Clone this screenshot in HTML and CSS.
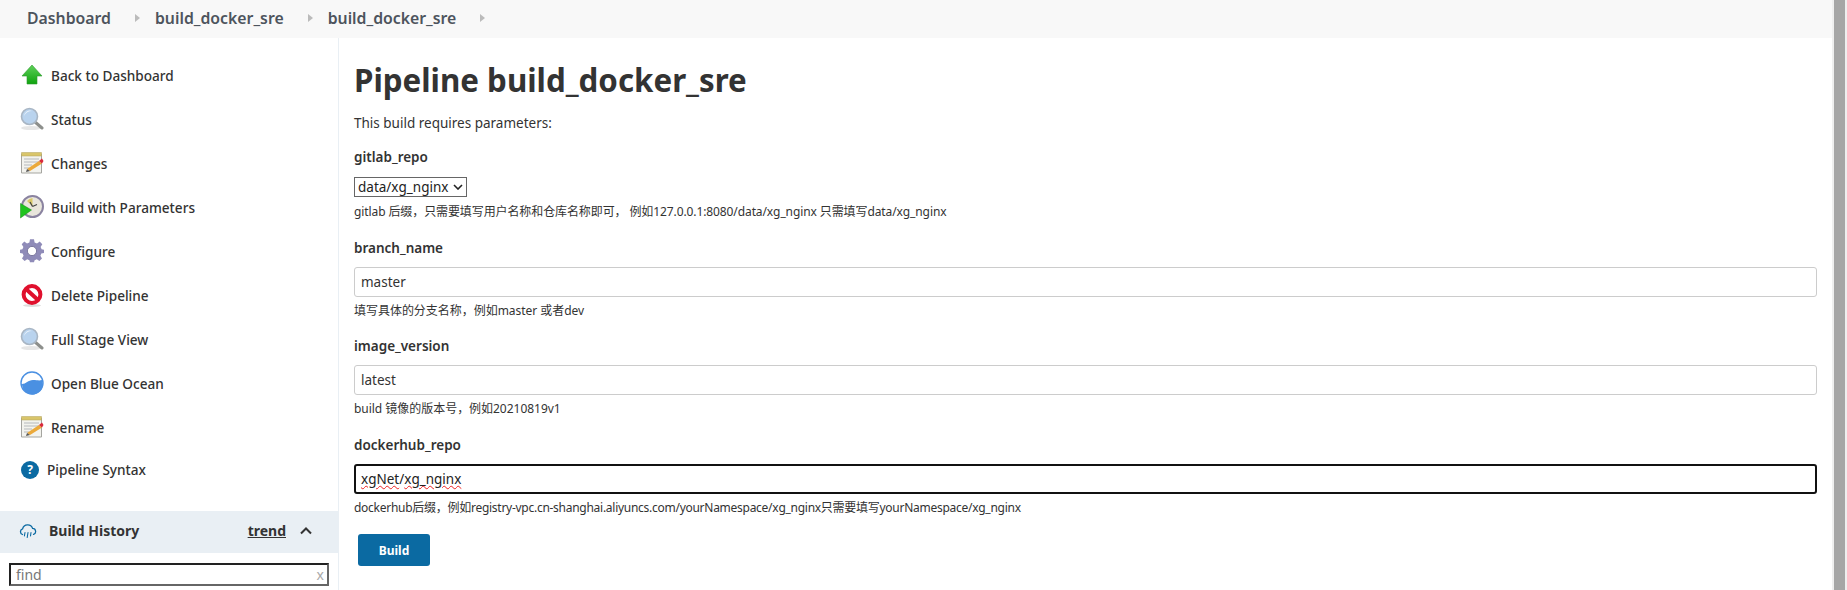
FILE: index.html
```html
<!DOCTYPE html>
<html lang="en">
<head>
    <meta charset="UTF-8">
    <title>build_docker_sre</title>
    <link rel="stylesheet" href="styles.css">
</head>
<body>
    <div class="content">
        <div class="breadcrumbs">
            <a class="crumb">Dashboard</a><span class="crumb-arrow"></span>
            <a class="crumb">build_docker_sre</a><span class="crumb-arrow"></span>
            <a class="crumb">build_docker_sre</a><span class="crumb-arrow"></span>
        </div>
        <div class="page">
            <div class="side">
                <div class="tasks">
                    <div class="task">
                        <svg class="task-icon" viewBox="0 0 24 24"><defs><linearGradient id="up" x1="0" y1="0" x2="0" y2="1"><stop offset="0" stop-color="#5fd05a"/><stop offset="1" stop-color="#0fa30f"/></linearGradient></defs><path d="M12 2 L22 13 H17 V21 H7 V13 H2 Z" fill="url(#up)" stroke="#2f9a2f" stroke-width=".6"/></svg>
                        <span>Back to Dashboard</span>
                    </div>
                    <div class="task">
                        <svg class="task-icon" viewBox="0 0 24 24"><ellipse cx="11" cy="21" rx="10" ry="2" fill="#e6e6e6"/><path d="M15 15 L22 21" stroke="#8d8f8c" stroke-width="3" stroke-linecap="round"/><circle cx="9.5" cy="9.5" r="8" fill="#b9d3ee" stroke="#a9b6c4" stroke-width="1.6"/><path d="M4 9 A6 6 0 0 1 12 4 A9 9 0 0 0 4 9 Z" fill="#eef5fc"/></svg>
                        <span>Status</span>
                    </div>
                    <div class="task">
                        <svg class="task-icon" viewBox="0 0 24 24"><path d="M1.5 3 H21.5 V22 H1.5 Z" fill="#f3f3ee" stroke="#a5a5a0"/><path d="M1.5 1.5 H21.5 V5 H1.5 Z" fill="#d9c56a" stroke="#b0a25c" stroke-width=".5"/><path d="M4 8 H19 M4 11 H19 M4 14 H12 M4 17 H9" stroke="#b5b8bb"/><path d="M7 18 L19 10 L22 12.5 L10 20 Z" fill="#eba93a"/><path d="M19 10 L22 7.5 L23.5 10 L22 12.5 Z" fill="#d92a3c"/><path d="M7 18 L6 21 L10 20 Z" fill="#555"/></svg>
                        <span>Changes</span>
                    </div>
                    <div class="task">
                        <svg class="task-icon" viewBox="0 0 24 24"><circle cx="12.5" cy="11.5" r="10.5" fill="#e9e6dc" stroke="#8a83a0" stroke-width="2"/><path d="M12.5 3 V11.5 L7 6 A8 8 0 0 1 12.5 3 Z" fill="#d9c969"/><path d="M12.5 11.5 L10 7 M12.5 11.5 L17 9.5" stroke="#444" stroke-width="1.2"/><path d="M0.5 8.5 L11.5 15 L0.5 23 Z" fill="#1fc31f" stroke="#148a14" stroke-width=".5"/></svg>
                        <span>Build with Parameters</span>
                    </div>
                    <div class="task">
                        <svg class="task-icon" viewBox="0 0 24 24"><path d="M10 1 H14 L14.6 4.2 L17 5.2 L19.7 3.4 L22.3 6 L20.6 8.8 L21.6 11 L24 11.6 V14.8 L21.3 15.4 L20.4 17.6 L22 20.3 L19.4 22.8 L16.8 21.1 L14.6 22 L14 24 H10 L9.4 22 L7.2 21.1 L4.6 22.8 L2 20.3 L3.6 17.6 L2.7 15.4 L0 14.8 V11.6 L2.4 11 L3.4 8.8 L1.7 6 L4.3 3.4 L7 5.2 L9.4 4.2 Z" transform="translate(0 -.8)" fill="#8f8bb8"/><circle cx="12" cy="12" r="4.6" fill="#fff" stroke="#6c6890" stroke-width=".8"/></svg>
                        <span>Configure</span>
                    </div>
                    <div class="task">
                        <svg class="task-icon" viewBox="0 0 24 24"><ellipse cx="12" cy="22.5" rx="9" ry="1.5" fill="#ddd"/><circle cx="12" cy="11.5" r="8.4" fill="#fff" stroke="#e0102d" stroke-width="4"/><path d="M6 6 L18 17" stroke="#e0102d" stroke-width="4"/></svg>
                        <span>Delete Pipeline</span>
                    </div>
                    <div class="task">
                        <svg class="task-icon" viewBox="0 0 24 24"><ellipse cx="11" cy="21" rx="10" ry="2" fill="#e6e6e6"/><path d="M15 15 L22 21" stroke="#8d8f8c" stroke-width="3" stroke-linecap="round"/><circle cx="9.5" cy="9.5" r="8" fill="#b9d3ee" stroke="#a9b6c4" stroke-width="1.6"/><path d="M4 9 A6 6 0 0 1 12 4 A9 9 0 0 0 4 9 Z" fill="#eef5fc"/></svg>
                        <span>Full Stage View</span>
                    </div>
                    <div class="task">
                        <svg class="task-icon" viewBox="0 0 24 24"><circle cx="12" cy="12" r="11" fill="#fff" stroke="#4a90e2" stroke-width="1.4"/><path d="M2 13 C6 13 8 9 13 9 C17 9 19 10 22 9 A10.4 10.4 0 1 1 2 13 Z" fill="#4a90e2"/></svg>
                        <span>Open Blue Ocean</span>
                    </div>
                    <div class="task">
                        <svg class="task-icon" viewBox="0 0 24 24"><path d="M1.5 3 H21.5 V22 H1.5 Z" fill="#f3f3ee" stroke="#a5a5a0"/><path d="M1.5 1.5 H21.5 V5 H1.5 Z" fill="#d9c56a" stroke="#b0a25c" stroke-width=".5"/><path d="M4 8 H19 M4 11 H19 M4 14 H12 M4 17 H9" stroke="#b5b8bb"/><path d="M7 18 L19 10 L22 12.5 L10 20 Z" fill="#eba93a"/><path d="M19 10 L22 7.5 L23.5 10 L22 12.5 Z" fill="#d92a3c"/><path d="M7 18 L6 21 L10 20 Z" fill="#555"/></svg>
                        <span>Rename</span>
                    </div>
                    <div class="task task-help">
                        <span class="help-icon">?</span>
                        <span>Pipeline Syntax</span>
                    </div>
                </div>
                <div class="history-head">
                    <svg class="cloud" viewBox="0 0 18 14"><path d="M3.5 10.5 A3 3 0 0 1 3.6 4.8 A5.2 5.2 0 0 1 13.6 4.4 A3.1 3.1 0 0 1 14.6 10.4" fill="none" stroke="#0b6aa2" stroke-width="1.3" stroke-linecap="round"/><path d="M6 8.5 L5.4 12 M9 8.5 L8.2 13.5 M12 8.5 L11.5 12" stroke="#0b6aa2" stroke-width="1.1" stroke-linecap="round"/></svg>
                    <span class="history-title">Build History</span>
                    <a class="trend">trend</a>
                    <svg class="chevron" viewBox="0 0 12 8"><path d="M1 6.5 L6 1.5 L11 6.5" fill="none" stroke="#333" stroke-width="2"/></svg>
                </div>
                <div class="find">
                    <span class="find-text">find</span>
                    <span class="find-clear">x</span>
                </div>
            </div>
            <div class="main">
                <h1>Pipeline build_docker_sre</h1>
                <p class="intro">This build requires parameters:</p>
                <div class="param param-first">
                    <div class="param-name">gitlab_repo</div>
                    <div class="select"><span>data/xg_nginx</span><svg viewBox="0 0 10 6"><path d="M1 1 L5 5 L9 1" fill="none" stroke="#222" stroke-width="1.6"/></svg></div>
                    <div class="param-desc desc-select">gitlab 后缀，只需要填写用户名称和仓库名称即可， 例如127.0.0.1:8080/data/xg_nginx 只需填写data/xg_nginx</div>
                </div>
                <div class="param">
                    <div class="param-name">branch_name</div>
                    <div class="text-input">master</div>
                    <div class="param-desc">填写具体的分支名称，例如master 或者dev</div>
                </div>
                <div class="param param-tight">
                    <div class="param-name">image_version</div>
                    <div class="text-input">latest</div>
                    <div class="param-desc">build 镜像的版本号，例如20210819v1</div>
                </div>
                <div class="param">
                    <div class="param-name">dockerhub_repo</div>
                    <div class="text-input focused"><span class="misspelled">xgNet</span>/<span class="misspelled">xg_nginx</span></div>
                    <div class="param-desc desc-long">dockerhub后缀，例如registry-vpc.cn-shanghai.aliyuncs.com/yourNamespace/xg_nginx只需要填写yourNamespace/xg_nginx</div>
                </div>
                <button class="build-btn">Build</button>
            </div>
        </div>
    </div>
    <div class="scrollbar"><div class="scroll-thumb"></div></div>
</body>
</html>
```

FILE: styles.css
```css
html, body {
    height: 100%;
    margin: 0;
    overflow: hidden;
}

body {
    background-color: #fff;
    color: #333;
    font-family: "Noto Sans", "Noto Sans CJK SC", sans-serif;
    font-size: 13.5px;
    display: flex;
}

.content {
    flex: 1;
    min-width: 0;
    display: flex;
    flex-direction: column;
}

.breadcrumbs {
    background-color: #f8f8f8;
    height: 38px;
    box-sizing: border-box;
    padding: 0 0 2px 27px;
    display: flex;
    align-items: center;
    flex-shrink: 0;
}

.crumb {
    color: #4d545d;
    font-size: 15.8px;
    font-weight: 600;
}

.crumb-arrow {
    border-left: 5px solid #bbb;
    border-top: 4px solid transparent;
    border-bottom: 4px solid transparent;
    margin: 0 15px 0 24px;
}

.page {
    flex: 1;
    display: flex;
    min-height: 0;
}

.side {
    width: 338px;
    border-right: 1px solid #e9eff4;
    flex-shrink: 0;
    display: flex;
    flex-direction: column;
}

.tasks {
    padding: 15px 0 0 20px;
    height: 473px;
    box-sizing: border-box;
}

.task {
    height: 44px;
    display: flex;
    align-items: center;
    gap: 7px;
    font-size: 13.6px;
    font-weight: 500;
}

.task-help {
    height: 41px;
    gap: 8px;
}

.help-icon {
    width: 18px;
    height: 18px;
    border-radius: 50%;
    background-color: #0b6aa2;
    color: #fff;
    font-size: 12px;
    font-weight: 700;
    display: flex;
    align-items: center;
    justify-content: center;
    margin-left: 1px;
}

.task-icon {
    width: 24px;
    height: 24px;
    flex-shrink: 0;
}

.history-head {
    background-color: #e9eff4;
    height: 42px;
    box-sizing: border-box;
    padding: 0 0 3px 19px;
    flex-shrink: 0;
    display: flex;
    align-items: center;
    font-size: 14px;
}

.cloud {
    width: 18px;
    height: 14px;
    margin-right: 12px;
}

.history-title {
    font-weight: 700;
    flex: 1;
}

.trend {
    font-weight: 700;
    text-decoration: underline;
    margin-right: 14px;
}

.chevron {
    width: 12px;
    height: 8px;
    margin-right: 26px;
}

.find {
    margin: 10px 9px 0;
    height: 23px;
    flex-shrink: 0;
    box-sizing: border-box;
    border: 2px solid #222;
    border-right-color: #666;
    border-bottom-color: #666;
    display: flex;
    align-items: center;
    justify-content: space-between;
    padding: 0 3px 0 5px;
    font-size: 14px;
    color: #777;
}

.find-clear {
    color: #aaa;
}

.main {
    flex: 1;
    padding: 0 15px;
    min-width: 0;
}

h1 {
    font-size: 31.3px;
    font-weight: 700;
    line-height: 44px;
    margin: 20px 0 0;
}

.intro {
    margin: 11px 0 0;
    line-height: 20px;
}

.param {
    margin-top: 18px;
}

.param-first {
    margin-top: 14px;
}

.param-tight {
    margin-top: 17px;
}

.param-name {
    font-weight: 600;
    line-height: 20px;
}

.select {
    border: 1px solid #666;
    width: 113px;
    height: 20px;
    box-sizing: border-box;
    margin-top: 10px;
    display: flex;
    align-items: center;
    justify-content: space-between;
    padding: 0 3px;
    color: #222;
}

.select svg {
    width: 10px;
    height: 6px;
}

.text-input {
    margin-top: 9px;
    height: 30px;
    box-sizing: border-box;
    border: 1px solid #ccc;
    border-radius: 3px;
    padding: 0 6px;
    line-height: 28px;
}

.focused {
    border: 2px solid #111;
    padding: 0 5px;
    line-height: 26px;
    color: #222;
}

.misspelled {
    text-decoration: underline wavy #e22;
    text-decoration-thickness: 1px;
}

.param-desc {
    font-size: 12px;
    line-height: 16px;
    margin-top: 6px;
    letter-spacing: -0.03px;
}

.desc-select {
    margin-top: 7px;
    letter-spacing: -0.1px;
}

.desc-long {
    letter-spacing: -0.27px;
}

.build-btn {
    display: block;
    margin: 18px 0 0 4px;
    width: 72px;
    height: 32px;
    border: none;
    border-radius: 3px;
    background-color: #0b6aa2;
    color: #fff;
    font-family: inherit;
    font-size: 12px;
    font-weight: 700;
}

.scrollbar {
    width: 15px;
    flex-shrink: 0;
    background-color: #efefef;
    padding-left: 2px;
    box-sizing: border-box;
}

.scroll-thumb {
    height: 100%;
    width: 11px;
    background-color: #a6a6a6;
}
```
